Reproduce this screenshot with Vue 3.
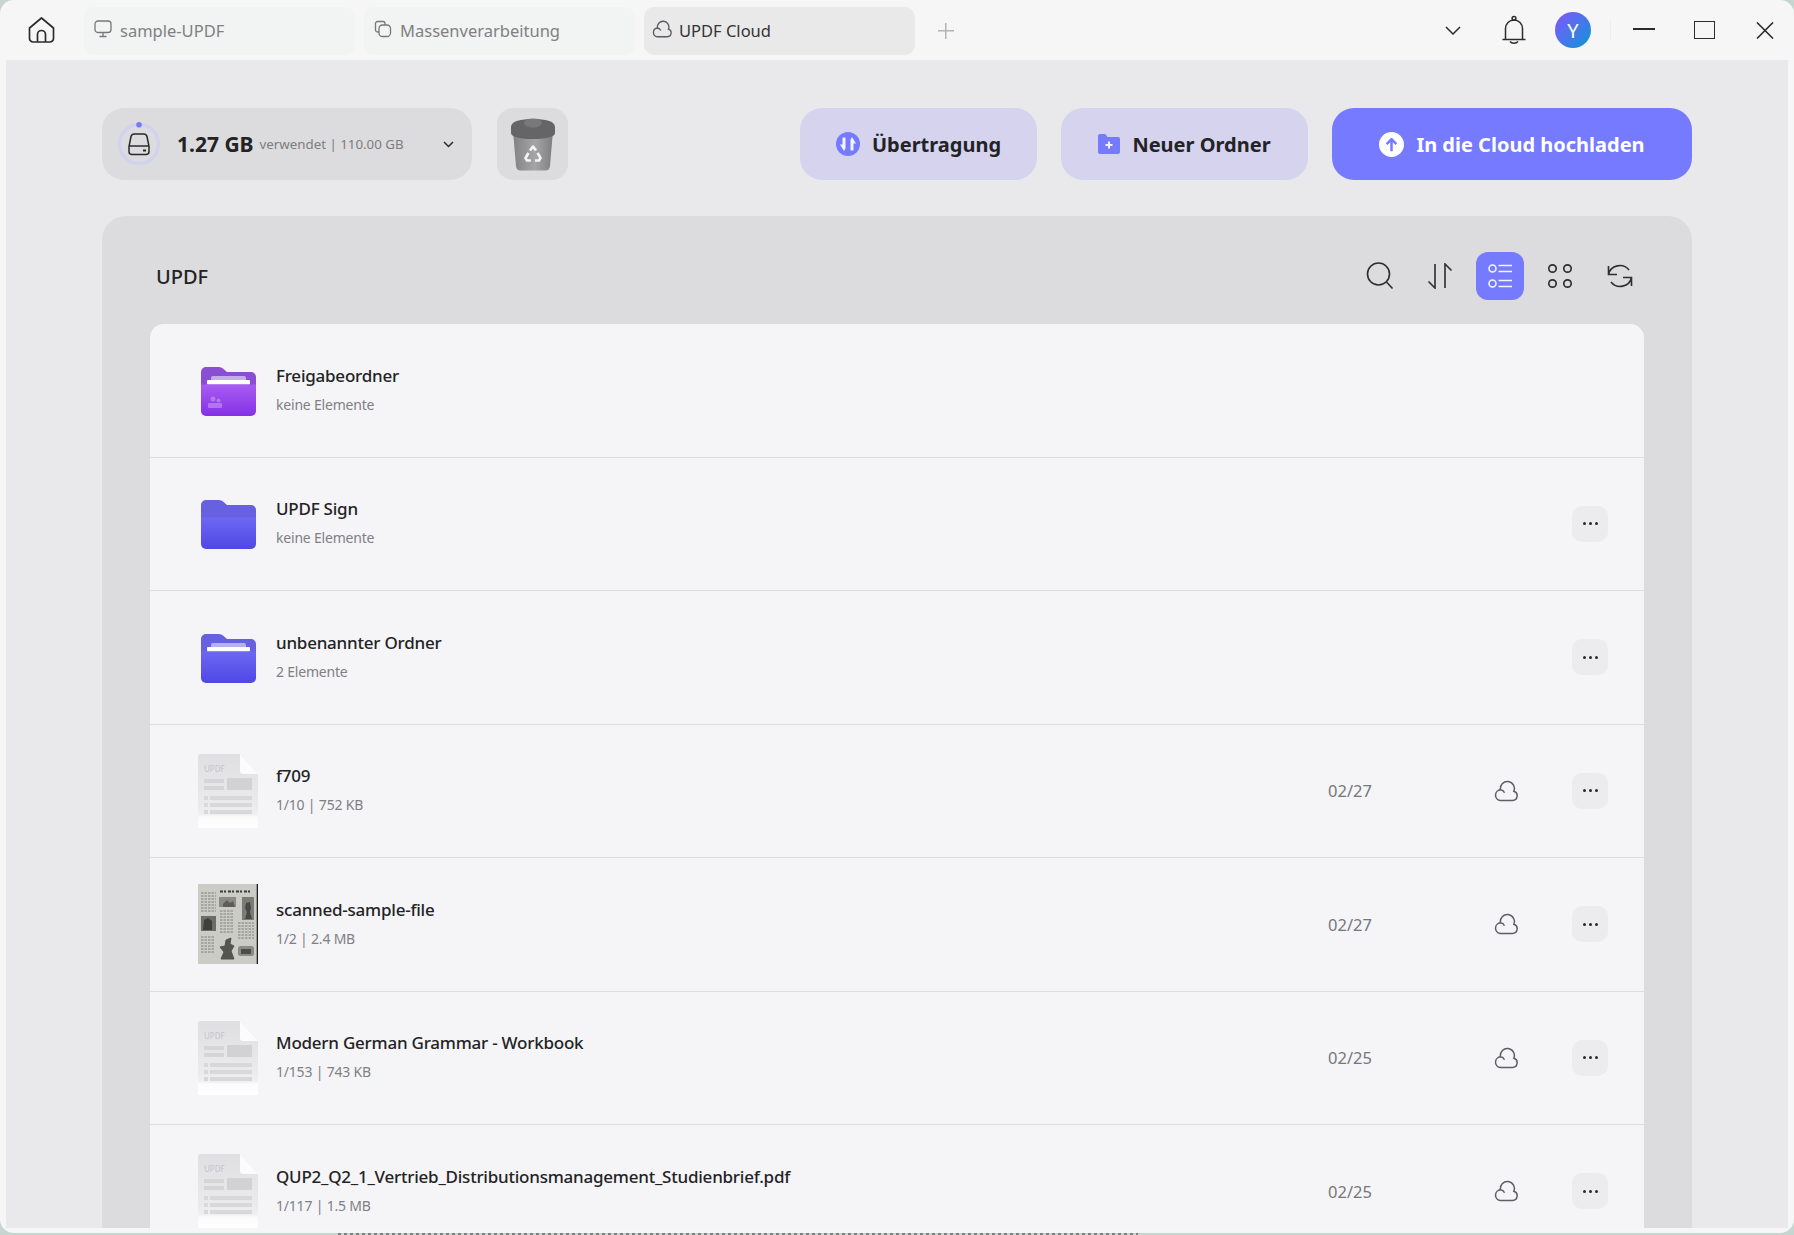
<script setup>
const tabs = [
  { label: 'sample-UPDF', icon: 'monitor' },
  { label: 'Massenverarbeitung', icon: 'copies' },
  { label: 'UPDF Cloud', icon: 'cloud', active: true }
]
const rows = [
  { name: 'Freigabeordner', sub: 'keine Elemente', kind: 'share' },
  { name: 'UPDF Sign', sub: 'keine Elemente', kind: 'sign', more: true },
  { name: 'unbenannter Ordner', sub: '2 Elemente', kind: 'folder', more: true },
  { name: 'f709', sub: '1/10 | 752 KB', kind: 'file', date: '02/27', more: true },
  { name: 'scanned-sample-file', sub: '1/2 | 2.4 MB', kind: 'scan', date: '02/27', more: true },
  { name: 'Modern German Grammar - Workbook', sub: '1/153 | 743 KB', kind: 'file', date: '02/25', more: true },
  { name: 'QUP2_Q2_1_Vertrieb_Distributionsmanagement_Studienbrief.pdf', sub: '1/117 | 1.5 MB', kind: 'file', date: '02/25', more: true }
]
const cloudPath = 'M6 20.5H18.500a4.700 4.700 0 0 0 1.300-9.200A7 7 0 1 0 6.500 9.800 5.400 5.400 0 0 0 6 20.500Z M6.500 9.800a5 5 0 0 1 4 3'
const scanLeft = [9, 12, 15, 18, 21, 24, 27]
const scanMid = [27, 30, 33, 36, 39, 42, 45, 48]
const scanLow = [53, 56, 59, 62, 65, 68]
const scanRight = [39, 42, 45, 48, 51, 54]
</script>

<template>
  <div class="screen">
    <div class="window">
      <header class="titlebar">
        <svg class="home" viewBox="0 0 27 26" fill="none" stroke="#2c2c2e" stroke-width="1.700" stroke-linejoin="round">
          <path d="M1.500 11 13.500 1 25.500 11V21.500a3.500 3.500 0 0 1-3.500 3.500H5a3.500 3.500 0 0 1-3.500-3.500Z" />
          <path d="M9.500 25V17.500a4 4 0 0 1 8 0V25" />
        </svg>
        <div v-for="t in tabs" :key="t.label" class="tab" :class="{ active: t.active }">
          <svg v-if="t.icon === 'monitor'" class="tab-icon" viewBox="0 0 18 18" fill="none" stroke="#77777b" stroke-width="1.300">
            <rect x="1" y="1" width="16" height="11.500" rx="3" />
            <path d="M9 12.500V16M5.500 16.500h7" />
          </svg>
          <svg v-else-if="t.icon === 'copies'" class="tab-icon" viewBox="0 0 18 18" fill="none" stroke="#77777b" stroke-width="1.300">
            <path d="M5 12H3.500A2 2 0 0 1 1.500 10V3.500A2 2 0 0 1 3.500 1.500H9A2 2 0 0 1 11 3.500V5" />
            <rect x="5" y="5" width="11.500" height="11.500" rx="3.500" />
          </svg>
          <svg v-else class="tab-icon" viewBox="0 0 24 22" fill="none" stroke="#5b5b5f" stroke-width="1.600">
            <path :d="cloudPath" />
          </svg>
          <span>{{ t.label }}</span>
        </div>
        <span class="plus"></span>
        <div class="spacer"></div>
        <svg class="tb-chevron" viewBox="0 0 16 9" fill="none" stroke="#2c2c2e" stroke-width="1.500"><path d="M1 1l7 7 7-7" /></svg>
        <svg class="bell" viewBox="0 0 24 30" fill="none" stroke="#2c2c2e" stroke-width="1.500">
          <path d="M3.500 24V13.500a8.500 8.500 0 0 1 17 0V24" />
          <circle cx="12" cy="3.300" r="1.900" />
          <path d="M.5 24.500h23M8 26.500a4.500 3 0 0 0 8 0" />
        </svg>
        <div class="avatar">Y</div>
        <div class="sep"></div>
        <span class="min"></span>
        <span class="max"></span>
        <svg class="close" viewBox="0 0 18 17" fill="none" stroke="#2c2c2e" stroke-width="1.600"><path d="M1 .5l16 16M17 .5l-16 16" /></svg>
      </header>

      <main class="main">
        <div class="toolbar">
          <div class="storage">
            <svg class="ring" viewBox="0 0 44 44" fill="none">
              <circle cx="22" cy="22" r="19.500" stroke="#d3d2ee" stroke-width="3.500" />
              <circle cx="22" cy="2.800" r="2.800" fill="#757aff" />
              <path stroke="#2a2a2c" stroke-width="1.500" stroke-linejoin="round" d="M12 24.500 14 14.500a3.500 3.500 0 0 1 3.500-2.500h9a3.500 3.500 0 0 1 3.500 2.500l2 10v5a3 3 0 0 1-3 3H15a3 3 0 0 1-3-3ZM12 24h20" />
              <path stroke="#2a2a2c" stroke-width="1.800" d="M26 28.500h3" />
            </svg>
            <strong class="gb">1.27 GB</strong>
            <span class="used">verwendet | 110.00 GB</span>
            <svg class="st-chevron" viewBox="0 0 11 7" fill="none" stroke="#2a2a2c" stroke-width="1.500"><path d="M1 1l4.500 4.500L10 1" /></svg>
          </div>
          <div class="trash">
            <svg viewBox="0 0 44 54" width="44" height="54">
              <defs>
                <linearGradient id="tb" x1="0" x2="1" y1="0" y2="0">
                  <stop offset="0" stop-color="#828284" />
                  <stop offset=".55" stop-color="#a5a5a7" />
                  <stop offset="1" stop-color="#7e7e80" />
                </linearGradient>
              </defs>
              <path fill="url(#tb)" d="M2 14H42L39 49a5 5 0 0 1-5 4.500H10A5 5 0 0 1 5 49Z" />
              <path fill="#656568" d="M0 10C0 4 10 2 22 2s22 2 22 8v6c0 4-10 6-22 6S0 20 0 16Z" />
              <ellipse cx="22" cy="6" rx="9" ry="4.500" fill="#78787b" />
              <g fill="none" stroke="#f4f4f6" stroke-width="2.600" stroke-linejoin="round" transform="translate(22 37)">
                <path d="M-3 -3.500l3-4 3 4M-4.500 -1l-3 5 1.500 2.500h4M4.500 -1l3 5-1.500 2.500h-4" />
              </g>
            </svg>
          </div>
          <div class="spacer"></div>
          <button class="btn soft b1">
            <svg viewBox="0 0 24 24" width="24" height="24">
              <circle cx="12" cy="12" r="12" fill="#757aff" />
              <path fill="#f3f3ff" d="M9.500 5.500h-3v7H4l4 6.500 1.500-2.500ZM14.500 18.500h3v-7H20L16 5l-1.500 2.500Z" />
            </svg>
            <span>Übertragung</span>
          </button>
          <button class="btn soft b2">
            <svg viewBox="0 0 22 20" width="22" height="20">
              <path fill="#757aff" d="M0 2a2 2 0 0 1 2-2h4.500a2 2 0 0 1 1.500.7L9.500 3H20a2 2 0 0 1 2 2v13a2 2 0 0 1-2 2H2a2 2 0 0 1-2-2Z" />
              <path fill="#f3f3ff" d="M10 7.500h2v2.500h2.500v2H12v2.500h-2V12H7.500v-2H10Z" />
            </svg>
            <span>Neuer Ordner</span>
          </button>
          <button class="btn primary b3">
            <svg viewBox="0 0 26 26" width="25" height="25">
              <circle cx="13" cy="13" r="13" fill="#fff" />
              <path fill="none" stroke="#757aff" stroke-width="2.600" stroke-linejoin="round" d="M13 20V8M8 12.500l5-5 5 5" />
            </svg>
            <span>In die Cloud hochladen</span>
          </button>
        </div>

        <section class="panel">
          <div class="panel-head">
            <span class="panel-title">UPDF</span>
            <div class="tools">
              <div class="tool">
                <svg viewBox="0 0 28 28" width="28" height="28" fill="none" stroke="#2e2e30" stroke-width="1.600"><circle cx="12.500" cy="12" r="11" /><path d="M20.500 20l6 6.500" /></svg>
              </div>
              <div class="tool">
                <svg viewBox="0 0 26 26" width="26" height="26" fill="none" stroke="#2e2e30" stroke-width="1.600"><path d="M8 1v24L1.500 18.500M18 25V1l6.500 6.500" /></svg>
              </div>
              <div class="tool on">
                <svg viewBox="0 0 24 24" width="24" height="24" fill="none" stroke="#f4f4ff" stroke-width="1.600"><circle cx="4.500" cy="4.500" r="3.500" /><circle cx="4.500" cy="19.500" r="3.500" /><path d="M10.500 1.500H24M10.500 7.500H24M10.500 16.500H24M10.500 22.500H24" /></svg>
              </div>
              <div class="tool">
                <svg viewBox="0 0 26 26" width="26" height="26" fill="none" stroke="#2e2e30" stroke-width="1.700"><circle cx="5.500" cy="5.500" r="3.700" /><circle cx="20.500" cy="5.500" r="3.700" /><circle cx="5.500" cy="20.500" r="3.700" /><circle cx="20.500" cy="20.500" r="3.700" /></svg>
              </div>
              <div class="tool">
                <svg viewBox="0 0 26 26" width="26" height="26" fill="none" stroke="#2e2e30" stroke-width="1.600"><path d="M1.500 11.500A11.500 11 0 0 1 22 7M1.500 3v8.500H10M24.500 14.500A11.500 11 0 0 1 4 19M24.500 23v-8.500H16" /></svg>
              </div>
            </div>
          </div>

          <div class="list">
            <div v-for="r in rows" :key="r.name" class="row">
              <div class="thumb">
                <svg v-if="r.kind === 'share' || r.kind === 'sign' || r.kind === 'folder'" class="folder" viewBox="0 0 55 49" width="55" height="49">
                  <defs>
                    <linearGradient id="fp" x1="0" x2="0" y1="0" y2="1">
                      <stop offset="0" stop-color="#a95cf2" />
                      <stop offset="1" stop-color="#8431e6" />
                    </linearGradient>
                    <linearGradient id="fb" x1="0" x2="0" y1="0" y2="1">
                      <stop offset="0" stop-color="#6c68f2" />
                      <stop offset="1" stop-color="#4f48e6" />
                    </linearGradient>
                  </defs>
                  <path :fill="r.kind === 'share' ? '#8a4ed2' : '#6761df'" d="M0 5a5 5 0 0 1 5-5h13a6 6 0 0 1 4 1.500L26 5h24a5 5 0 0 1 5 5V20H0Z" />
                  <template v-if="r.kind !== 'sign'">
                    <path :fill="r.kind === 'share' ? '#c4aee9' : '#b3b1ee'" d="M10 11a2 2 0 0 1 2-2h31a2 2 0 0 1 2 2v4H10Z" />
                    <rect x="6" y="13" width="43" height="4.500" rx="1" fill="#fff" />
                  </template>
                  <path :fill="r.kind === 'share' ? 'url(#fp)' : 'url(#fb)'" d="M0 17.500H55V44a5 5 0 0 1-5 5H5a5 5 0 0 1-5-5Z" />
                  <g v-if="r.kind === 'share'" fill="#c79af5" opacity=".6">
                    <circle cx="12" cy="32" r="2.500" />
                    <circle cx="17.500" cy="33.500" r="2" />
                    <rect x="7" y="36" width="14" height="5" rx="1" />
                  </g>
                </svg>

                <svg v-else-if="r.kind === 'file'" viewBox="0 0 60 74" width="60" height="74">
                  <defs>
                    <linearGradient id="pg" x1="0" x2="0" y1="0" y2="1">
                      <stop offset="0" stop-color="#dfdfe2" />
                      <stop offset=".7" stop-color="#ebebee" />
                      <stop offset=".82" stop-color="#f0f0f3" />
                      <stop offset=".85" stop-color="#fbfbfc" />
                      <stop offset="1" stop-color="#fff" />
                    </linearGradient>
                  </defs>
                  <path fill="url(#pg)" d="M0 3a3 3 0 0 1 3-3H42L60 20V74H0Z" />
                  <path fill="#fbfbfc" d="M42 0l18 20H45a3 3 0 0 1-3-3Z" />
                  <text x="6" y="18" class="thumb-text">UPDF</text>
                  <rect x="6" y="25" width="20" height="4" fill="#d5d5d8" />
                  <rect x="6" y="32" width="20" height="4" fill="#d5d5d8" />
                  <rect x="29" y="24" width="25" height="12" fill="#d2d2d5" />
                  <g fill="#d8d8db">
                    <rect x="6" y="42" width="4" height="4" /><rect x="12" y="42" width="42" height="4" />
                    <rect x="6" y="49" width="4" height="4" /><rect x="12" y="49" width="42" height="4" />
                    <rect x="6" y="56" width="4" height="4" /><rect x="12" y="56" width="42" height="4" />
                  </g>
                </svg>

                <svg v-else viewBox="0 0 60 80" width="60" height="80">
                  <rect width="60" height="80" fill="#cbccc5" />
                  <rect x="58.700" width="1.300" height="80" fill="#23201d" />
                  <path stroke="#3a3a38" stroke-width="1.800" stroke-dasharray="3 1 2 2" d="M22 7.500h31" />
                  <g stroke="#6c6c68" stroke-width=".8" stroke-dasharray="2.500 1">
                    <path v-for="y in scanLeft" :key="'l' + y" :d="`M3 ${y}h15`" />
                    <path v-for="y in scanMid" :key="'m' + y" :d="`M22 ${y}h13`" />
                    <path v-for="y in scanLow" :key="'b' + y" :d="`M3 ${y}h13`" />
                    <path v-for="y in scanRight" :key="'r' + y" :d="`M40 ${y}h16`" />
                  </g>
                  <rect x="21" y="13" width="17" height="10" fill="#8b8b84" />
                  <path fill="#5c5c58" d="M25 20l4-4 3 3 3-2 2 6H25Z" />
                  <rect x="44" y="13" width="12" height="23" fill="#7c7c76" />
                  <path fill="#48484a" d="M48 19l4-1 1 6-1 4 2 7h-7l2-7-2-4Z" />
                  <rect x="3" y="32" width="15" height="15" fill="#6d6d68" />
                  <path fill="#3f3f3c" d="M6 36l4-2 4 3v9H5Z" />
                  <path fill="#55554f" stroke="#55554f" stroke-width="1" d="M28 56l5-2-1 6 4 2-3 5 3 8H23l3-7-4-5 5-1Z" />
                  <rect x="40" y="62" width="16" height="10" rx="2.500" fill="#8b8b85" />
                  <path fill="#4c4c48" d="M43 65h10v5H43Z" />
                </svg>
              </div>
              <div class="info">
                <div class="name">{{ r.name }}</div>
                <div class="sub">{{ r.sub }}</div>
              </div>
              <div v-if="r.date" class="date">{{ r.date }}</div>
              <svg v-if="r.date" class="row-cloud" viewBox="0 0 24 22" fill="none" stroke="#5f5f63" stroke-width="1.500"><path :d="cloudPath" /></svg>
              <div v-if="r.more" class="more"><i></i><i></i><i></i></div>
            </div>
          </div>
        </section>
      </main>
    </div>
    <div class="behind"></div>
  </div>
</template>

<style scoped>
.screen {
  width: 1794px;
  height: 1235px;
  overflow: hidden;
  background: #c5d6d1;
  font-family: "Noto Sans", "Open Sans", sans-serif;
  color: #232325;
}
.window {
  height: 1233px;
  border-radius: 14px;
  background: #f5f6f5;
  padding: 0 6px 5px;
  box-sizing: border-box;
  overflow: hidden;
}
.titlebar {
  height: 60px;
  display: flex;
  align-items: center;
  margin: 0 -6px;
  padding-left: 28px;
  box-sizing: border-box;
}
.home { width: 27px; height: 26px; margin-right: 29px; flex: none; }
.tab {
  width: 271px;
  height: 48px;
  margin: 1px 9px 0 0;
  border-radius: 10px;
  background: #f2f3f3;
  display: flex;
  align-items: center;
  padding-left: 10px;
  box-sizing: border-box;
  font-size: 16.500px;
  color: #808084;
  flex: none;
}
.tab.active { background: #e9e9ea; color: #333336; padding-left: 8px; }
.tab-icon { width: 18px; height: 18px; margin-right: 8px; margin-top: -4px; flex: none; }
.tab.active .tab-icon { width: 20px; margin-right: 7px; }
.plus {
  width: 16px;
  height: 16px;
  margin: 1px 0 0 14px;
  background:
    linear-gradient(#b4b4b7, #b4b4b7) center / 16px 1.500px no-repeat,
    linear-gradient(#b4b4b7, #b4b4b7) center / 1.500px 16px no-repeat;
}
.spacer { flex: 1; }
.tb-chevron { width: 16px; height: 9px; margin-right: 41px; flex: none; }
.bell { width: 24px; height: 30px; margin-right: 29px; flex: none; }
.avatar {
  width: 36px;
  height: 36px;
  border-radius: 50%;
  background: linear-gradient(135deg, #8554ff, #0b97d6);
  color: #fff;
  font-size: 20px;
  display: flex;
  align-items: center;
  justify-content: center;
  flex: none;
}
.sep { width: 1px; height: 20px; background: #ecedec; margin: 0 22px 0 19px; }
.min { width: 22px; height: 2px; background: #2c2c2e; margin-right: 39px; margin-top: -3px; }
.max { width: 21px; height: 18px; border: 1.500px solid #2c2c2e; box-sizing: border-box; margin-right: 41px; }
.close { width: 18px; height: 17px; margin-right: 20px; flex: none; }

.main {
  height: 1168px;
  overflow: hidden;
  background: #e9e9eb;
  padding: 48px 96px 0;
  box-sizing: border-box;
}
.toolbar { height: 72px; display: flex; gap: 24px; }
.storage {
  width: 370px;
  background: #dcdcde;
  border-radius: 22px;
  display: flex;
  align-items: center;
  padding: 0 18px 0 15px;
  box-sizing: border-box;
}
.ring { width: 44px; height: 44px; margin-right: 16px; flex: none; }
.gb { font-size: 21px; font-weight: 700; margin-right: 6px; white-space: nowrap; }
.used { font-size: 13.300px; color: #7c7c80; white-space: nowrap; }
.st-chevron { width: 11px; height: 7px; margin-left: auto; flex: none; }
.trash {
  width: 71px;
  background: #dcdcde;
  border-radius: 16px;
  display: flex;
  align-items: center;
  justify-content: center;
  margin-left: 1px;
}
.btn {
  height: 72px;
  border: 0;
  border-radius: 22px;
  display: flex;
  align-items: center;
  justify-content: center;
  gap: 12px;
  font-family: inherit;
  font-size: 20px;
  font-weight: 700;
  padding: 0;
}
.soft { background: #d5d3ee; color: #232325; }
.primary { background: #757aff; color: #fff; }
.b1 { width: 237px; }
.b2 { width: 247px; }
.b3 { width: 360px; }

.panel {
  margin-top: 36px;
  background: #dcdcde;
  border-radius: 24px 24px 0 0;
  padding: 0 48px;
}
.panel-head {
  height: 108px;
  padding-top: 12px;
  box-sizing: border-box;
  display: flex;
  align-items: center;
  justify-content: space-between;
}
.panel-title { font-size: 20px; font-weight: 500; margin-left: 6px; }
.tools { display: flex; gap: 12px; }
.tool {
  width: 48px;
  height: 48px;
  border-radius: 12px;
  display: flex;
  align-items: center;
  justify-content: center;
}
.tool.on { background: #757aff; }
.list {
  background: #f5f5f8;
  border-radius: 14px 14px 0 0;
}
.row {
  height: 133.500px;
  box-sizing: border-box;
  border-bottom: 1.500px solid #dedee0;
  display: flex;
  align-items: center;
  padding-left: 48px;
}
.thumb {
  width: 60px;
  height: 80px;
  margin-right: 18px;
  display: flex;
  align-items: center;
  justify-content: center;
  flex: none;
}
.folder { margin-top: 2px; }
.thumb-text { font-size: 8px; fill: #c4c4c8; font-family: "Noto Sans", sans-serif; }
.info { flex: 1; min-width: 0; padding-bottom: 2px; }
.name { font-size: 17px; letter-spacing: -0.23px; font-weight: 500; line-height: 26px; color: #232325; white-space: nowrap; }
.sub { font-size: 14px; letter-spacing: -0.2px; line-height: 22px; color: #808084; margin-top: 5px; }
.date { width: 44px; font-size: 16.500px; color: #77777b; margin-right: 122px; flex: none; }
.row-cloud { width: 24px; height: 22px; margin-right: 54px; flex: none; }
.more {
  width: 36px;
  height: 36px;
  border-radius: 10px;
  background: #ececee;
  display: flex;
  align-items: center;
  justify-content: center;
  gap: 3px;
  margin-right: 36px;
  flex: none;
}
.more i { width: 3px; height: 3px; border-radius: 50%; background: #2a2a2c; }
.behind {
  height: 2px;
  width: 800px;
  margin-left: 338px;
  background: repeating-linear-gradient(90deg, #7c8081 0 3px, transparent 3px 6px);
}
</style>

<style>
html, body { margin: 0; background: #c5d6d1; overflow: hidden; }
</style>
